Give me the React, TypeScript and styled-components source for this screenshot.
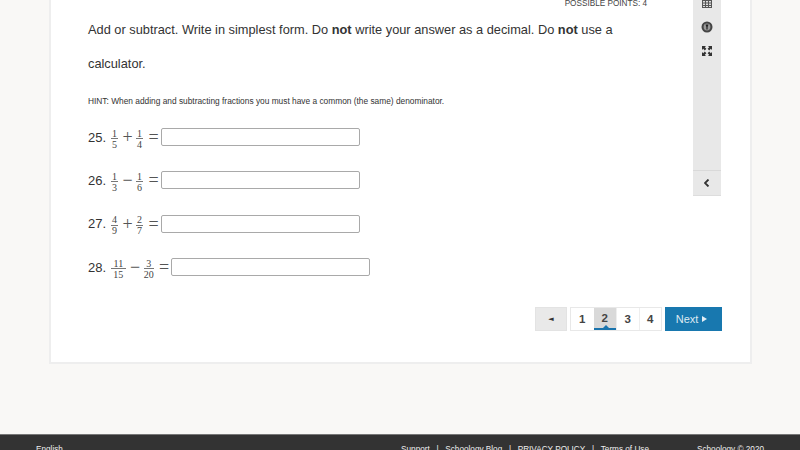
import React from "react";
import styled, { createGlobalStyle } from "styled-components";

const Global = createGlobalStyle`
  html, body { margin: 0; padding: 0; background: #f9f8f6; }
  * { box-sizing: border-box; }
`;
const Page = styled.div`
  width: 800px; height: 450px; overflow: hidden; background: #f9f8f6;
  display: flex; flex-direction: column;
  font-family: "Liberation Sans", Arial, sans-serif; color: #333;
`;
const Card = styled.main`
  margin-left: 49px; width: 703px; height: 364px; flex: none;
  background: #fff; border: solid #eeeeee; border-width: 0 2px 2px 2px;
  display: grid; grid-template-columns: 642px 28px;
`;
const Content = styled.section`
  padding-left: 37px; display: flex; flex-direction: column;
`;
const Points = styled.div`
  height: 9px; line-height: 8px; font-size: 8.2px; color: #444; text-align: right;
  padding-right: 46px;
`;
const Instructions = styled.p`
  margin: 3.5px 0 0; width: 560px; font-size: 12.8px; line-height: 34.5px; color: #333;
`;
const Hint = styled.p`
  margin: 13.5px 0 21px; font-size: 8.35px; line-height: 12px; color: #333; height: 12px;
`;
const Row = styled.div`
  display: flex; align-items: center; height: 18px; margin-bottom: 25.4px;
`;
const Num = styled.span`
  font-size: 13px; color: #333; width: 23px; flex: none; white-space: nowrap;
`;
const Frac = styled.span`
  display: inline-flex; flex-direction: column; align-items: center; margin-top: 3px;
  font-family: "Liberation Serif", serif; font-size: 10px; line-height: 9px; color: #444;
`;
const Top = styled.span<{ $wide: boolean }>`
  padding: 0 ${p => (p.$wide ? 2.5 : 1)}px 0.5px; border-bottom: 1px solid #777;
`;
const Bottom = styled.span`padding-top: 0.5px;`;
const Op = styled.span`
  font-family: "Liberation Serif", serif; font-size: 18px; color: #555; margin: 0 3px 0 4px;
  width: 11px; text-align: center; line-height: 18px;
`;
const Eq = styled(Op)`margin: 0 1.5px 0 5px;`;
const Field = styled.input`
  width: 199px; height: 18px; border: 1px solid #a9a9a9; border-radius: 2px; background: #fff;
  padding: 0; margin: 0;
`;
const Pager = styled.nav`
  display: flex; align-items: stretch; justify-content: flex-end; height: 24.5px;
  margin-top: 5px; margin-right: -29px;
`;
const Prev = styled.button`
  width: 32px; border: 1px solid #e3e3e3; background: #e9e9e9; color: #333; padding: 0;
  font-size: 7px; margin-right: 3px; font-family: "DejaVu Sans", sans-serif;
`;
const Pages = styled.div`
  display: flex; border: 1px solid #e8e8e8; margin-right: 3px;
`;
const PageNum = styled.button<{ $active?: boolean }>`
  width: 22.5px; border: 0; padding: 0; position: relative;
  background: ${p => (p.$active ? "#d9d9d9" : "#fff")};
  border-bottom: ${p => (p.$active ? "2px solid #1a74ad" : "0")};
  border-left: ${p => (p.$active ? "0" : "1px solid #eee")};
  font: bold 11.5px "Liberation Sans", sans-serif; color: #444;
  &:first-child { border-left: 0; }
`;
const Caret = styled.span`
  position: absolute; left: 9px; bottom: 0; width: 0; height: 0;
  border: 3px solid transparent; border-top: 0; border-bottom: 3px solid #1a74ad;
`;
const Next = styled.button`
  width: 57px; border: 0; background: #1878af; color: #dfeaf2; padding: 0 4px 0 0;
  font: 11px "Liberation Sans", sans-serif; display: flex; align-items: center; justify-content: center; gap: 4px;
`;
const NextArrow = styled.span`
  width: 0; height: 0; border-left: 5px solid #e4eef5;
  border-top: 3px solid transparent; border-bottom: 3px solid transparent;
`;
const Side = styled.aside`
  height: 196px; background: #e8e8e8; display: flex; flex-direction: column; align-items: center;
  border-bottom: 1px solid #ddd; width: 28px;
`;
const SideIcon = styled.svg<{ $top?: number }>`
  display: block; flex: none; margin-top: ${p => p.$top ?? 0}px;
`;
const SideBottom = styled.div`
  margin-top: auto; height: 25px; width: 100%; border-top: 1px solid #d9d9d9;
  display: flex; align-items: center; justify-content: center;
`;
const Footer = styled.footer`
  margin-top: 70px; flex: none; height: 16px; background: #333; border-top: 1px solid #777;
  display: flex; justify-content: space-between; color: #eee; font-size: 8.2px; line-height: 12px;
  padding: 9px 36px 0 36px; white-space: nowrap;
`;
const FootLinks = styled.div`display: flex; gap: 48px;`;
const Links = styled.div`display: flex; gap: 6.7px;`;

function F({ t, b }: { t: string; b: string }) {
  return <Frac><Top $wide={t.length > 1 || b.length > 1}>{t}</Top><Bottom>{b}</Bottom></Frac>;
}

const rows = [
  ["25.", "1", "5", "+", "1", "4"],
  ["26.", "1", "3", "−", "1", "6"],
  ["27.", "4", "9", "+", "2", "7"],
  ["28.", "11", "15", "−", "3", "20"],
];

export default function App() {
  return (
    <Page>
      <Global />
      <Card>
        <Content>
          <Points>POSSIBLE POINTS: 4</Points>
          <Instructions>
            Add or subtract. Write in simplest form. Do <b>not</b> write your answer as a decimal. Do <b>not</b> use a calculator.
          </Instructions>
          <Hint>HINT: When adding and subtracting fractions you must have a common (the same) denominator.</Hint>
          {rows.map(r => (
            <Row key={r[0]}>
              <Num>{r[0]}</Num>
              <F t={r[1]} b={r[2]} />
              <Op>{r[3]}</Op>
              <F t={r[4]} b={r[5]} />
              <Eq>=</Eq>
              <Field />
            </Row>
          ))}
          <Pager>
            <Prev>◄</Prev>
            <Pages>
              <PageNum>1</PageNum>
              <PageNum $active>2<Caret /></PageNum>
              <PageNum>3</PageNum>
              <PageNum>4</PageNum>
            </Pages>
            <Next>Next <NextArrow /></Next>
          </Pager>
        </Content>
        <Side>
          <SideIcon width="10" height="8" viewBox="0 0 10 8">
            <path d="M0 0h10v8H0z" fill="#555" />
            <path d="M1 1h2v1.5H1zM4 1h2v1.5H4zM7 1h2v1.5H7zM1 3.5h2V5H1zM4 3.5h2V5H4zM7 3.5h2V5H7zM1 6h2v1H1zM4 6h2v1H4zM7 6h2v1H7z" fill="#ddd" />
          </SideIcon>
          <SideIcon $top={13} width="12" height="12" viewBox="0 0 12 12">
            <circle cx="6" cy="6" r="5.5" fill="#444" />
            <circle cx="6" cy="6" r="3.4" fill="#999" />
            <path d="M4.5 3.5h3L6.6 6v2.6H5.4V6z" fill="#222" />
          </SideIcon>
          <SideIcon $top={13} width="10" height="10" viewBox="0 0 10 10">
            <path d="M0 0h4L2.8 1.2 4.4 2.8 2.8 4.4 1.2 2.8 0 4zM10 0v4L8.8 2.8 7.2 4.4 5.6 2.8 7.2 1.2 6 0zM0 10V6l1.2 1.2 1.6-1.6 1.6 1.6-1.6 1.6L4 10zM10 10H6l1.2-1.2-1.6-1.6 1.6-1.6 1.6 1.6L10 6z" fill="#333" />
          </SideIcon>
          <SideBottom>
            <SideIcon width="6" height="8" viewBox="0 0 6 8">
              <path d="M4.5 0.5 1 4l3.5 3.5" fill="none" stroke="#333" strokeWidth="1.8" />
            </SideIcon>
          </SideBottom>
        </Side>
      </Card>
      <Footer>
        <span>English</span>
        <FootLinks>
          <Links>
            <span>Support</span><span>|</span><span>Schoology Blog</span><span>|</span><span>PRIVACY POLICY</span><span>|</span><span>Terms of Use</span>
          </Links>
          <span>Schoology © 2020</span>
        </FootLinks>
      </Footer>
    </Page>
  );
}
